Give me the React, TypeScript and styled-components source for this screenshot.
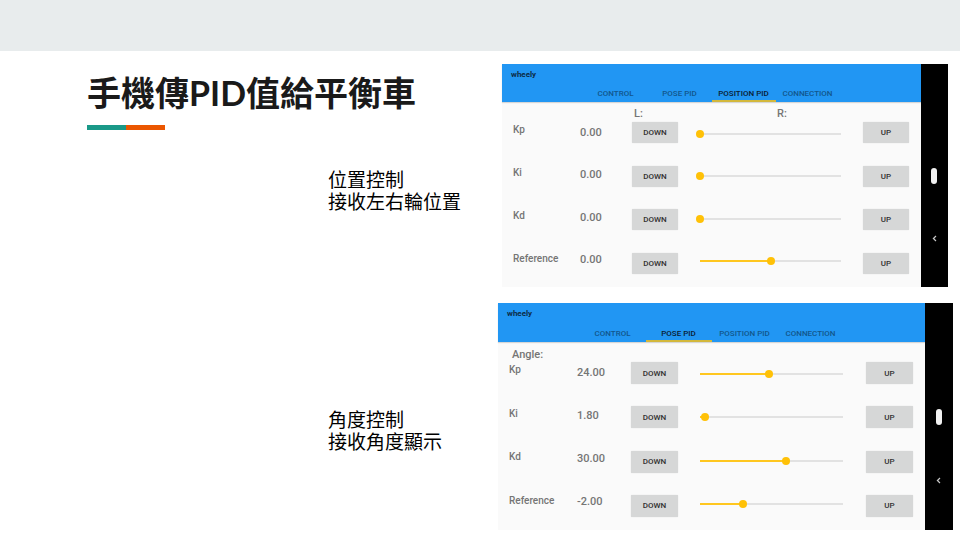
import React, { useState } from "react";
import styled, { createGlobalStyle } from "styled-components";

const GlobalStyle = createGlobalStyle`
  *, *::before, *::after { box-sizing: border-box; }
  body {
    margin: 0;
    background: #ffffff;
    color: #000000;
    font-family: Roboto, "Noto Sans CJK TC", sans-serif;
  }
`;

const Band = styled.header`
  height: 51px;
  background: #e8eced;
`;

const Slide = styled.main`
  display: grid;
  grid-template-columns: 498fr 462fr;
  align-items: start;
  padding-top: 13px;
`;

const TextColumn = styled.div`
  display: flex;
  flex-direction: column;
  padding-left: 87px;
`;

const Title = styled.h1`
  margin: 5px 0 0;
  color: #1a1a1a;
  font-family: Lato, "Noto Sans CJK TC", sans-serif;
  font-size: 34px;
  font-weight: 700;
  line-height: 48px;
  white-space: nowrap;
`;

const Accent = styled.div`
  display: flex;
  width: 78px;
  height: 5px;
  margin-top: 8px;
  background: linear-gradient(to right, #1a9988 50%, #eb5600 50%);
`;

const Note = styled.div<{ $top: number }>`
  display: flex;
  flex-direction: column;
  align-self: flex-end;
  width: 170px;
  margin-top: ${(p) => p.$top}px;
`;

const NoteLine = styled.p`
  margin: 0;
  font-family: "Noto Sans CJK TC", sans-serif;
  font-size: 19px;
  line-height: 22px;
`;

const PhoneColumn = styled.div`
  display: flex;
  flex-direction: column;
  gap: 16px;
`;

const Phone = styled.section<{ $left: number; $right: number }>`
  display: flex;
  margin-left: ${(p) => p.$left}px;
  margin-right: ${(p) => p.$right}px;
`;

const Screen = styled.div`
  flex: 1;
  min-width: 0;
  background: #fafafa;
`;

const AppBar = styled.div`
  background: #2196f3;
  padding-top: 5px;
  box-shadow: 0 1px 1px rgba(0, 0, 0, 0.14);
`;

const AppName = styled.h2`
  margin: 0;
  padding-left: 9px;
  color: #0c2c47;
  font-size: 8px;
  font-weight: 700;
  line-height: 12px;
`;

const Tabs = styled.nav<{ $top: number }>`
  display: flex;
  justify-content: center;
  padding-top: ${(p) => p.$top}px;
`;

const Tab = styled.button<{ $active: boolean; $width: number }>`
  width: ${(p) => p.$width}px;
  height: 16px;
  padding: 1px 0 0;
  border: 0;
  border-bottom: 2px solid ${(p) => (p.$active ? "#d3b83c" : "transparent")};
  background: none;
  color: ${(p) => (p.$active ? "#0a2033" : "#12568c")};
  font-family: Roboto, sans-serif;
  font-size: 8px;
  font-weight: 500;
  line-height: 13px;
  white-space: nowrap;
`;

const Readouts = styled.div<{ $top: number; $left: number }>`
  display: grid;
  grid-auto-flow: column;
  grid-auto-columns: 143px;
  padding: ${(p) => p.$top}px 0 0 ${(p) => p.$left}px;
  height: 20px;
  color: #757575;
  font-size: 11px;
  font-weight: 500;
  line-height: 16px;
`;

const Board = styled.div<{ $columns: string }>`
  display: grid;
  grid-template-columns: ${(p) => p.$columns};
  align-items: start;
  padding: 0 12px 13px 11px;
`;

const Column = styled.div<{ $height: number; $top?: number; $inset?: string }>`
  display: flex;
  flex-direction: column;
  justify-content: space-between;
  min-height: ${(p) => p.$height}px;
  margin-top: ${(p) => p.$top ?? 0}px;
  padding: ${(p) => p.$inset ?? "0"};
`;

const Name = styled.label`
  color: #757575;
  font-size: 10px;
  font-weight: 500;
  line-height: 16px;
`;

const Value = styled.output`
  color: #757575;
  font-size: 11px;
  font-weight: 500;
  line-height: 16px;
`;

const StepButton = styled.button<{ $height: number }>`
  width: 100%;
  height: ${(p) => p.$height}px;
  padding: 0;
  border: 0;
  border-radius: 1px;
  background: #d6d7d7;
  box-shadow: 0 0 1px rgba(0, 0, 0, 0.2);
  color: #303030;
  font-family: Roboto, sans-serif;
  font-size: 8px;
  font-weight: 500;
`;

const Slider = styled.input`
  appearance: none;
  display: block;
  width: 100%;
  height: 16px;
  margin: 0;
  background: none;

  &::-webkit-slider-runnable-track {
    height: 2px;
    background: linear-gradient(
      to right,
      transparent 4px,
      #ffc71f 4px,
      #ffc71f calc(4px + (100% - 8px) * var(--fill)),
      #e2e2e2 calc(4px + (100% - 8px) * var(--fill)),
      #e2e2e2 calc(100% - 4px),
      transparent calc(100% - 4px)
    );
  }

  &::-webkit-slider-thumb {
    appearance: none;
    width: 8px;
    height: 8px;
    margin-top: -3px;
    border-radius: 50%;
    background: #ffc107;
  }
`;

const NavBar = styled.div<{ $width: number }>`
  display: grid;
  grid-template-rows: 1fr 16px 1fr;
  justify-items: center;
  width: ${(p) => p.$width}px;
  padding-right: 1px;
  background: #000000;
`;

const HomePill = styled.button`
  grid-row: 2;
  width: 6px;
  padding: 0;
  border: 0;
  border-radius: 3px;
  background: #f1f1f1;
`;

const BackButton = styled.button`
  grid-row: 3;
  display: flex;
  align-items: center;
  padding: 6px 0 0;
  border: 0;
  background: none;
`;

type Gain = { name: string; value: number; min: number; max: number };

type PhoneSpec = {
  id: string;
  left: number;
  right: number;
  active: string;
  tabWidth: number;
  tabTop: number;
  readouts: string[];
  readoutTop: number;
  readoutLeft: number;
  columns: string;
  inset: string;
  heights: { names: number; values: number; buttons: number; sliders: number };
  buttonHeight: number;
  navWidth: number;
  gains: Gain[];
};

const TABS = ["CONTROL", "POSE PID", "POSITION PID", "CONNECTION"];

const POSITION: PhoneSpec = {
  id: "position",
  left: 4,
  right: 12,
  active: "POSITION PID",
  tabWidth: 64,
  tabTop: 5,
  readouts: ["L:", "R:"],
  readoutTop: 4,
  readoutLeft: 132,
  columns: "67fr 52fr 46px 185fr 46px",
  inset: "0 18px",
  heights: { names: 145, values: 143, buttons: 152, sliders: 143 },
  buttonHeight: 21,
  navWidth: 27,
  gains: [
    { name: "Kp", value: 0, min: 0, max: 50 },
    { name: "Ki", value: 0, min: 0, max: 50 },
    { name: "Kd", value: 0, min: 0, max: 50 },
    { name: "Reference", value: 0, min: -5, max: 5 },
  ],
};

const POSE: PhoneSpec = {
  id: "pose",
  left: 0,
  right: 7,
  active: "POSE PID",
  tabWidth: 66,
  tabTop: 6,
  readouts: ["Angle:"],
  readoutTop: 5,
  readoutLeft: 14,
  columns: "68fr 54fr 47px 188fr 47px",
  inset: "0 19px 0 18px",
  heights: { names: 147, values: 145, buttons: 155, sliders: 146 },
  buttonHeight: 22,
  navWidth: 28,
  gains: [
    { name: "Kp", value: 24, min: 0, max: 50 },
    { name: "Ki", value: 1.8, min: 0, max: 50 },
    { name: "Kd", value: 30, min: 0, max: 50 },
    { name: "Reference", value: -2, min: -5, max: 5 },
  ],
};

function WheelyPhone({ spec }: { spec: PhoneSpec }) {
  const [values, setValues] = useState(spec.gains.map((g) => g.value));
  const [active, setActive] = useState(spec.active);

  const update = (index: number, next: number) => {
    const { min, max } = spec.gains[index];
    const clamped = Math.min(max, Math.max(min, next));
    setValues((prev) => prev.map((v, i) => (i === index ? clamped : v)));
  };

  const fieldId = (name: string) => `${spec.id}-${name}`;

  const stepColumn = (label: string, delta: number) => (
    <Column $height={spec.heights.buttons}>
      {spec.gains.map((g, i) => (
        <StepButton
          key={g.name}
          type="button"
          $height={spec.buttonHeight}
          onClick={() => update(i, values[i] + delta)}
        >
          {label}
        </StepButton>
      ))}
    </Column>
  );

  return (
    <Phone $left={spec.left} $right={spec.right}>
      <Screen>
        <AppBar>
          <AppName>wheely</AppName>
          <Tabs $top={spec.tabTop}>
            {TABS.map((tab) => (
              <Tab
                key={tab}
                type="button"
                $active={tab === active}
                $width={spec.tabWidth}
                onClick={() => setActive(tab)}
              >
                {tab}
              </Tab>
            ))}
          </Tabs>
        </AppBar>
        <Readouts $top={spec.readoutTop} $left={spec.readoutLeft}>
          {spec.readouts.map((r) => (
            <span key={r}>{r}</span>
          ))}
        </Readouts>
        <Board $columns={spec.columns}>
          <Column $height={spec.heights.names}>
            {spec.gains.map((g) => (
              <Name key={g.name} htmlFor={fieldId(g.name)}>
                {g.name}
              </Name>
            ))}
          </Column>
          <Column $height={spec.heights.values} $top={3}>
            {spec.gains.map((g, i) => (
              <Value key={g.name} htmlFor={fieldId(g.name)}>
                {values[i].toFixed(2)}
              </Value>
            ))}
          </Column>
          {stepColumn("DOWN", -0.1)}
          <Column $height={spec.heights.sliders} $top={4} $inset={spec.inset}>
            {spec.gains.map((g, i) => (
              <Slider
                key={g.name}
                id={fieldId(g.name)}
                type="range"
                min={g.min}
                max={g.max}
                step={0.1}
                value={values[i]}
                onChange={(e) => update(i, Number(e.target.value))}
                style={
                  {
                    "--fill": (values[i] - g.min) / (g.max - g.min),
                  } as React.CSSProperties
                }
              />
            ))}
          </Column>
          {stepColumn("UP", 0.1)}
        </Board>
      </Screen>
      <NavBar $width={spec.navWidth}>
        <HomePill type="button" aria-label="Home" />
        <BackButton type="button" aria-label="Back">
          <svg width="5" height="7" viewBox="0 0 5 7" fill="none">
            <path d="M4 1 L1.4 3.5 L4 6" stroke="#c8c8c8" strokeWidth="1.2" />
          </svg>
        </BackButton>
      </NavBar>
    </Phone>
  );
}

export default function App() {
  return (
    <>
      <GlobalStyle />
      <Band />
      <Slide>
        <TextColumn>
          <Title>手機傳PID值給平衡車</Title>
          <Accent />
          <Note $top={38}>
            <NoteLine>位置控制</NoteLine>
            <NoteLine>接收左右輪位置</NoteLine>
          </Note>
          <Note $top={196}>
            <NoteLine>角度控制</NoteLine>
            <NoteLine>接收角度顯示</NoteLine>
          </Note>
        </TextColumn>
        <PhoneColumn>
          <WheelyPhone spec={POSITION} />
          <WheelyPhone spec={POSE} />
        </PhoneColumn>
      </Slide>
    </>
  );
}
